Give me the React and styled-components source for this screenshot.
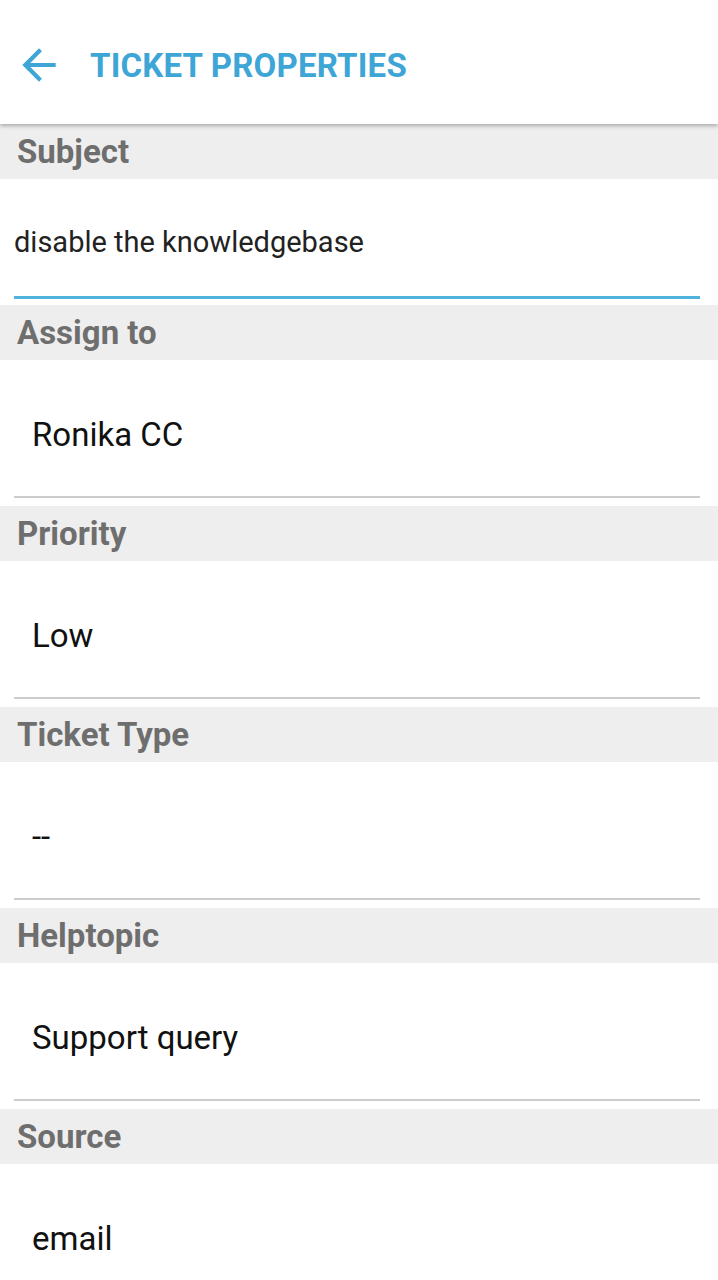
import React from "react";
import styled, { createGlobalStyle } from "styled-components";

const Global = createGlobalStyle`
  html, body { margin: 0; padding: 0; background: #ffffff; }
  body { font-family: Roboto, "Noto Sans", sans-serif; }
  * { box-sizing: border-box; }
`;

const Page = styled.div`
  width: 718px;
  min-height: 1280px;
  background: #ffffff;
  overflow: hidden;
`;

const TopBar = styled.header`
  height: 124px;
  display: flex;
  align-items: center;
  padding: 6px 0 0 14px;
  background: #ffffff;
  box-shadow: 0 2px 4px rgba(0, 0, 0, 0.28);
  position: relative;
  z-index: 1;
`;

const BackButton = styled.button`
  width: 50px;
  height: 50px;
  padding: 0;
  border: none;
  background: transparent;
  display: flex;
  align-items: center;
  justify-content: center;
  color: #3ea6d6;
  margin-right: 26px;
`;

const Title = styled.h1`
  margin: 0;
  font-family: Roboto, sans-serif;
  font-weight: 700;
  font-size: 33px;
  color: #3ea6d6;
  letter-spacing: 0.2px;
`;

const SectionLabel = styled.div`
  height: 55px;
  background: #eeeeee;
  display: flex;
  align-items: center;
  padding-left: 17px;
  font-family: Roboto, sans-serif;
  font-weight: 700;
  font-size: 33px;
  color: #6e6e6e;
`;

const Field = styled.div`
  height: ${(p) => (p.$input ? "126px" : "146px")};
  padding: 0 18px 0 14px;
  display: flex;
  flex-direction: column;
`;

const FieldBody = styled.div`
  flex: 1;
  display: flex;
  align-items: center;
  padding-left: ${(p) => (p.$input ? "0" : "18px")};
  padding-top: ${(p) => (p.$input ? "9px" : "12px")};
  font-family: Roboto, sans-serif;
  font-size: ${(p) => (p.$input ? "29px" : "33px")};
  color: ${(p) => (p.$input ? "#222222" : "#111111")};
`;

const Underline = styled.div`
  height: ${(p) => (p.$active ? "3px" : "2px")};
  background: ${(p) => (p.$active ? "#4fb3dd" : "#cccccc")};
  margin-bottom: ${(p) => (p.$active ? "6px" : "8px")};
`;

const ArrowBack = () => (
  <svg width="50" height="50" viewBox="0 0 24 24" fill="currentColor">
    <path d="M20 11H7.83l5.59-5.59L12 4l-8 8 8 8 1.41-1.41L7.83 13H20v-2z" />
  </svg>
);

const props = [
  { label: "Assign to", value: "Ronika CC" },
  { label: "Priority", value: "Low" },
  { label: "Ticket Type", value: "--" },
  { label: "Helptopic", value: "Support query" },
  { label: "Source", value: "email" },
];

export default function App() {
  return (
    <Page>
      <Global />
      <TopBar>
        <BackButton aria-label="Back">
          <ArrowBack />
        </BackButton>
        <Title>TICKET PROPERTIES</Title>
      </TopBar>
      <SectionLabel>Subject</SectionLabel>
      <Field $input>
        <FieldBody $input>disable the knowledgebase</FieldBody>
        <Underline $active />
      </Field>
      {props.map((p) => (
        <React.Fragment key={p.label}>
          <SectionLabel>{p.label}</SectionLabel>
          <Field>
            <FieldBody>{p.value}</FieldBody>
            <Underline />
          </Field>
        </React.Fragment>
      ))}
    </Page>
  );
}
